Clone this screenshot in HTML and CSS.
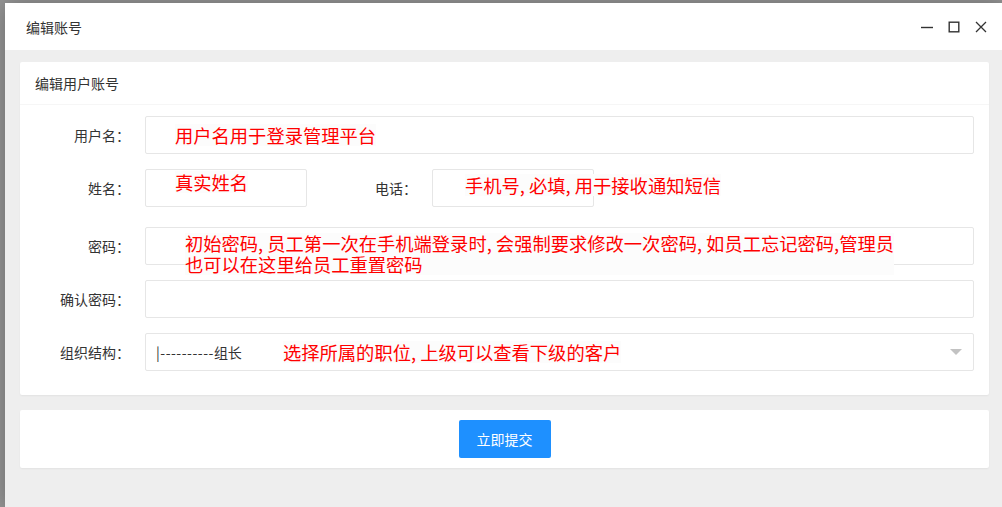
FILE: index.html
```html
<!DOCTYPE html>
<html lang="zh-CN">
<head>
  <meta charset="UTF-8">
  <title>编辑账号</title>
  <link rel="stylesheet" href="styles.css">
</head>
<body>
  <div class="layer">
    <div class="layer-title">
      <span>编辑账号</span>
      <div class="layer-ctrl">
        <svg width="12" height="12" viewBox="0 0 12 12"><path d="M0 6.5h12" stroke="#333" stroke-width="1.4"/></svg>
        <svg width="12" height="12" viewBox="0 0 12 12"><rect x="1.2" y="1.2" width="9.6" height="9.6" fill="none" stroke="#333" stroke-width="1.4"/></svg>
        <svg width="12" height="12" viewBox="0 0 12 12"><path d="M1 1l10 10M11 1L1 11" stroke="#333" stroke-width="1.3"/></svg>
      </div>
    </div>
    <div class="layer-body">
      <div class="card">
        <div class="card-header">编辑用户账号</div>
        <div class="card-body">
          <div class="form-item">
            <label class="form-label">用户名：</label>
            <div class="input-block">
              <div class="input"></div>
              <span class="note note-user">用户名用于登录管理平台</span>
            </div>
          </div>
          <div class="form-item inline">
            <label class="form-label">姓名：</label>
            <div class="input-inline">
              <div class="input"></div>
              <span class="note note-name">真实姓名</span>
            </div>
            <label class="form-label">电话：</label>
            <div class="input-inline">
              <div class="input"></div>
              <span class="note note-phone">手机号, 必填, 用于接收通知短信</span>
            </div>
          </div>
          <div class="form-item">
            <label class="form-label">密码：</label>
            <div class="input-block">
              <div class="input"></div>
              <p class="note note-pwd">初始密码, 员工第一次在手机端登录时, 会强制要求修改一次密码, 如员工忘记密码,管理员<br>也可以在这里给员工重置密码</p>
            </div>
          </div>
          <div class="form-item">
            <label class="form-label">确认密码：</label>
            <div class="input-block">
              <div class="input"></div>
            </div>
          </div>
          <div class="form-item">
            <label class="form-label">组织结构：</label>
            <div class="input-block">
              <div class="input select">
                <span><span class="dash">|----------</span>组长</span>
                <i class="caret"></i>
              </div>
              <span class="note note-org">选择所属的职位, 上级可以查看下级的客户</span>
            </div>
          </div>
        </div>
      </div>
      <div class="card submit-card">
        <button class="btn">立即提交</button>
      </div>
    </div>
  </div>
</body>
</html>
```

FILE: styles.css
```css
* { box-sizing: border-box; margin: 0; padding: 0; }
html, body { height: 100%; }
body {
  font-family: "Noto Sans CJK SC", "Noto Sans", sans-serif;
  font-size: 14px;
  color: #333;
  background: #959595;
  padding: 3px 0 0 5px;
  overflow: hidden;
}
.layer {
  width: 999px;
  height: 504px;
  background: #fff;
  box-shadow: 1px 1px 20px rgba(0,0,0,0.3);
  display: flex;
  flex-direction: column;
}
.layer-title {
  height: 47px;
  flex: none;
  display: flex;
  align-items: center;
  justify-content: space-between;
  padding: 0 17px 0 21px;
  font-size: 14px;
  color: #333;
}
.layer-ctrl {
  display: flex;
  align-items: center;
  gap: 15px;
}
.layer-ctrl svg { display: block; }
.layer-body {
  flex: 1;
  background: #eee;
  padding: 12px 15px;
}
.card {
  background: #fff;
  border-radius: 2px;
  box-shadow: 0 1px 2px rgba(0,0,0,0.05);
}
.card-header {
  height: 43px;
  line-height: 42px;
  padding: 0 15px;
  border-bottom: 1px solid #f6f6f6;
  font-size: 14px;
  color: #333;
}
.card-body {
  padding: 11px 15px 9px 0;
}
.form-item {
  display: flex;
  margin-bottom: 15px;
}
.form-item.inline { margin-bottom: 20px; }
.form-label {
  width: 110px;
  flex: none;
  margin-right: 15px;
  text-align: right;
  line-height: 38px;
  font-size: 14px;
  color: #333;
}
.input-block {
  flex: 1;
  position: relative;
}
.input-inline {
  width: 162px;
  position: relative;
}
.input {
  height: 38px;
  border: 1px solid #e6e6e6;
  border-radius: 2px;
  background: #fff;
}
.select {
  display: flex;
  align-items: center;
  justify-content: space-between;
  padding: 0 10px;
  font-size: 14px;
  color: #333;
}
.dash { letter-spacing: 0.5px; }
.caret {
  width: 0;
  height: 0;
  border-left: 6px solid transparent;
  border-right: 6px solid transparent;
  border-top: 6px solid #c2c2c2;
  margin-right: 1px;
}
/* red annotations laid over the fields */
.note {
  position: absolute;
  color: #ff0000;
  font-size: 18.3px;
  line-height: 22px;
  white-space: nowrap;
  background: #fcfcfc;
}
.note-user { left: 30px; top: 8px; }
.note-name { left: 30px; top: 2px; }
.note-phone { left: 33px; top: 5px; }
.note-pwd { left: 40px; top: 6px; line-height: 21px; }
.note-org { left: 138px; top: 8px; }
.submit-card {
  margin-top: 15px;
  padding: 10px 0;
  display: flex;
  justify-content: center;
}
.btn {
  height: 38px;
  padding: 0 18px;
  border: none;
  border-radius: 2px;
  background: #1e90ff;
  color: #fff;
  font-family: inherit;
  font-size: 14px;
  cursor: pointer;
}
```
